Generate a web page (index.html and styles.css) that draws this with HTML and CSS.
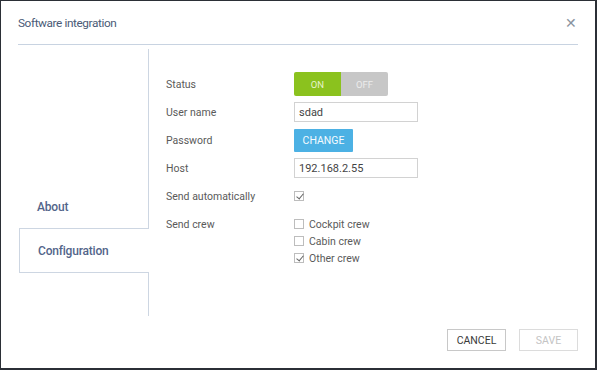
FILE: index.html
```html
<!DOCTYPE html>
<html>
	<head>
		<meta charset="utf-8">
		<link rel="stylesheet" href="styles.css">
	</head>
	<body>
		<div class="dialog">
			<header class="dialog-head">
				<h1 class="dialog-title">Software integration</h1>
				<span class="dialog-close">&#x2715;</span>
			</header>
			<div class="dialog-body">
				<nav class="tabs">
					<div class="tab-fill"></div>
					<a class="tab">About</a>
					<a class="tab tab-active">Configuration</a>
					<div class="tab-fill tab-end"></div>
				</nav>
				<section class="form">
					<div class="row">
						<label>Status</label>
						<div class="toggle"><span class="toggle-on">ON</span><span class="toggle-off">OFF</span></div>
					</div>
					<div class="row">
						<label>User name</label>
						<div class="input">sdad</div>
					</div>
					<div class="row">
						<label>Password</label>
						<button class="btn-blue">CHANGE</button>
					</div>
					<div class="row">
						<label>Host</label>
						<div class="input">192.168.2.55</div>
					</div>
					<div class="row">
						<label>Send automatically</label>
						<span class="check checked"></span>
					</div>
					<div class="row row-top">
						<label>Send crew</label>
						<div class="checks">
							<div class="check-line"><span class="check"></span>Cockpit crew</div>
							<div class="check-line"><span class="check"></span>Cabin crew</div>
							<div class="check-line"><span class="check checked"></span>Other crew</div>
						</div>
					</div>
				</section>
			</div>
			<footer class="dialog-foot">
				<button class="btn">CANCEL</button>
				<button class="btn btn-disabled">SAVE</button>
			</footer>
		</div>
	</body>
</html>
```

FILE: styles.css
```css
body {
	margin: 0;
	font-family: Roboto, "Noto Sans", sans-serif;
	background: #fff;
}
.dialog {
	box-sizing: border-box;
	width: 597px;
	height: 370px;
	border-style: solid;
	border-color: #2b2f36;
	border-width: 1px 2px 2px 1px;
	display: flex;
	flex-direction: column;
	background: #fff;
}
.dialog-head {
	margin: 0 17px;
	height: 43px;
	border-bottom: 1px solid #c8d3e1;
	display: flex;
	align-items: center;
	justify-content: space-between;
}
.dialog-title {
	margin: 0;
	font-size: 11.8px;
	font-weight: 400;
	letter-spacing: -0.4px;
	color: #4a5a76;
}
.dialog-close {
	color: #8a93a0;
	font-size: 14px;
	margin-right: 1px;
}
.dialog-body {
	display: flex;
	padding-top: 4px;
	height: 267px;
}
.tabs {
	width: 130px;
	margin-left: 18px;
	display: flex;
	flex-direction: column;
}
.tab-fill {
	flex: 1;
	border-right: 1px solid #cdd6e2;
}
.tab-end {
	flex: 0 0 43px;
}
.tab {
	height: 43px;
	display: flex;
	align-items: center;
	padding-left: 18px;
	font-size: 12px;
	font-weight: 500;
	letter-spacing: -0.2px;
	color: #53658a;
	border-right: 1px solid #cdd6e2;
}
.tab-active {
	border: 1px solid #cdd6e2;
	border-right: none;
	height: 43px;
}
.form {
	padding: 21px 0 0 17px;
	font-size: 10.5px;
	color: #5a5a5a;
}
.row {
	display: flex;
	align-items: center;
	height: 28px;
}
.row-top {
	align-items: flex-start;
	padding-top: 8px;
}
.row label {
	width: 128px;
}
.toggle {
	display: flex;
	width: 94px;
	height: 24px;
	border-radius: 2px;
	overflow: hidden;
	font-size: 9.5px;
}
.toggle span {
	flex: 1;
	display: flex;
	align-items: center;
	justify-content: center;
}
.toggle-on {
	background: #8bc21e;
	color: #e6f2cc;
}
.toggle-off {
	background: #c7c7c7;
	color: #ececec;
}
.input {
	box-sizing: border-box;
	width: 124px;
	height: 20px;
	border: 1px solid #d2d2d2;
	padding: 0 4px;
	display: flex;
	align-items: center;
	font-size: 11px;
	color: #444;
}
.btn-blue {
	width: 59px;
	height: 23px;
	border: none;
	border-radius: 1px;
	background: #4cb1e4;
	color: #f4fbff;
	font-family: inherit;
	font-size: 10.5px;
	padding: 0;
}
.check {
	box-sizing: border-box;
	display: inline-block;
	width: 10px;
	height: 10px;
	border: 1px solid #bdbdbd;
	position: relative;
}
.check.checked::after {
	content: "";
	position: absolute;
	left: 2.5px;
	top: -0.5px;
	width: 3px;
	height: 6px;
	border: solid #666;
	border-width: 0 1.3px 1.3px 0;
	transform: rotate(40deg);
}
.checks {
	display: flex;
	flex-direction: column;
	gap: 3px;
	margin-top: -1px;
}
.check-line {
	display: flex;
	align-items: center;
	gap: 5px;
	height: 14px;
}
.dialog-foot {
	flex: 1;
	display: flex;
	justify-content: flex-end;
	align-items: flex-start;
	gap: 13px;
	padding: 13px 17px 0 0;
}
.btn {
	box-sizing: border-box;
	width: 59px;
	height: 22px;
	border: 1px solid #c8c8c8;
	background: #fff;
	color: #3a3a3a;
	font-family: inherit;
	font-size: 10.5px;
	padding: 0;
}
.btn-disabled {
	color: #c4c4c4;
	border-color: #dcdcdc;
}
```
